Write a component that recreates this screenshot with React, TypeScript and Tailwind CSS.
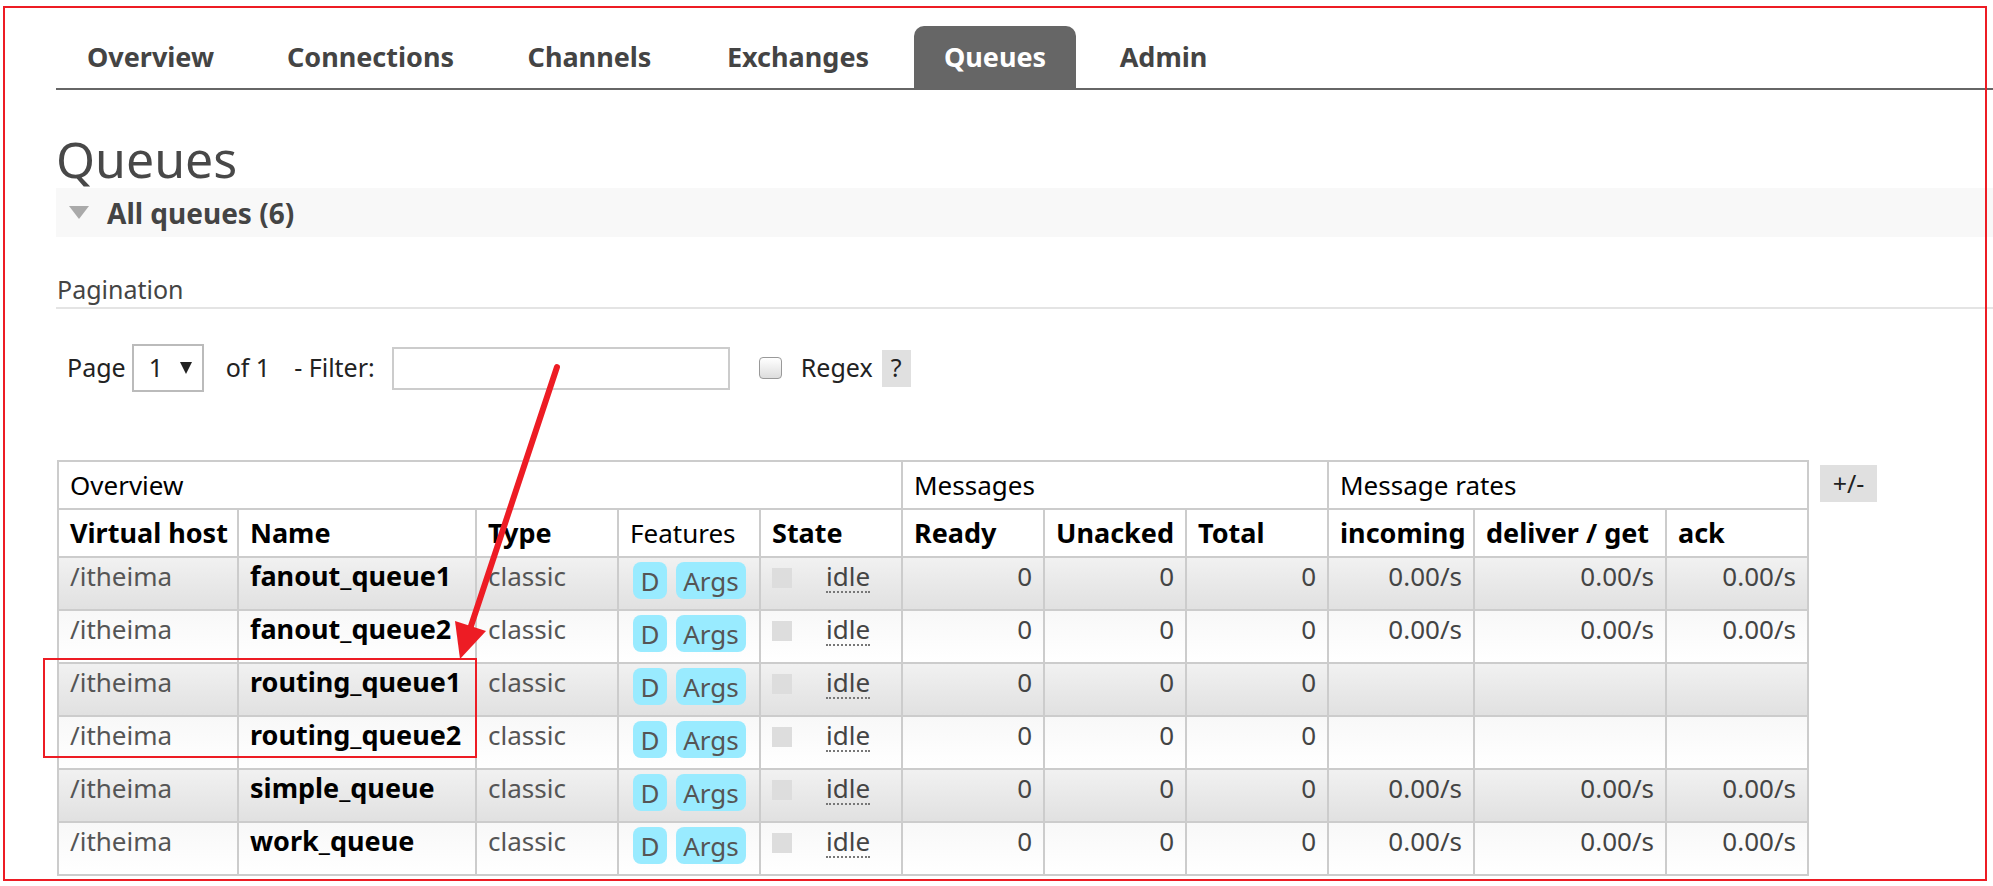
import React from "react";

/* ── Data ── */
const TABS = [
  { label: "Overview", w: "w-[187px]" },
  { label: "Connections", w: "w-[225px]" },
  { label: "Channels", w: "w-[185px]" },
  { label: "Exchanges", w: "w-[204px]" },
  { label: "Queues", w: "w-[162px]", active: true },
  { label: "Admin", w: "w-[147px]" },
];

const QUEUES = [
  { name: "fanout_queue1", rates: true },
  { name: "fanout_queue2", rates: true },
  { name: "routing_queue1", rates: false },
  { name: "routing_queue2", rates: false },
  { name: "simple_queue", rates: true },
  { name: "work_queue", rates: true },
];

const COLS = [180, 238, 142, 142, 142, 142, 142, 142, 146, 192, 142];

const td = "border-2 border-[#ccc] align-top px-[11px] pt-[3px] pb-0";
const th = "border-2 border-[#ccc] px-[11px] text-left align-middle leading-[30px] whitespace-nowrap";

export default function App() {
  return (
    <div className="relative w-[1993px] h-[886px] overflow-hidden bg-white font-['Noto_Sans',sans-serif] text-[#444]">
      <div className="pl-[56px] pt-[26px]">
        {/* Nav tabs */}
        <div className="flex gap-[14px] pl-[1px] border-b-2 border-[#666]">
          {TABS.map((t) => (
            <div
              key={t.label}
              className={`${t.w} h-[62px] flex items-center justify-center text-[27px] font-bold rounded-t-[10px] ${
                t.active ? "bg-[#666] text-white" : "text-[#444]"
              }`}
            >
              {t.label}
            </div>
          ))}
        </div>

        {/* Title */}
        <h1 className="mt-[45px] text-[50px] leading-[49px] font-normal text-[#484848]">Queues</h1>

        {/* All queues bar */}
        <div className="mt-[4px] h-[49px] bg-[#f8f8f8] flex items-center">
          <svg width="20" height="13" viewBox="0 0 20 13" className="ml-[13px]">
            <polygon points="0,0 20,0 10,13" fill="#aaa" />
          </svg>
          <span className="ml-[18px] text-[28px] font-bold text-[#444]">All queues (6)</span>
        </div>

        {/* Pagination */}
        <div className="mt-[37px] border-b-2 border-[#e4e4e4] pb-[3px]">
          <div className="pl-[1px] text-[25px] leading-[30px] text-[#444]">Pagination</div>
        </div>

        <div className="mt-[35px] flex items-center h-[48px] text-[25px] text-[#222]">
          <span className="ml-[11px]">Page</span>
          <div className="ml-[6px] w-[72px] h-[48px] border-2 border-[#bbb] flex items-center pl-[15px]">
            <span>1</span>
            <svg width="12" height="12" viewBox="0 0 12 12" className="ml-[17px]">
              <polygon points="0,0 12,0 6,12" fill="#222" />
            </svg>
          </div>
          <span className="ml-[22px]">of 1</span>
          <span className="ml-[24px]">- Filter:</span>
          <div className="ml-[17px] w-[338px] h-[43px] border-2 border-[#ccc] bg-white" />
          <div className="ml-[29px] w-[23px] h-[22px] rounded-[4px] border border-[#999] bg-linear-to-b from-white to-[#ddd]" />
          <span className="ml-[19px]">Regex</span>
          <span className="ml-[9px] w-[29px] h-[37px] bg-[#e0e0e0] flex items-center justify-center">?</span>
        </div>

        {/* Table */}
        <div className="mt-[68px] flex items-start">
          <table className="ml-[1px] table-fixed border-collapse w-[1750px] text-[26px]">
            <colgroup>
              {COLS.map((w, i) => (
                <col key={i} style={{ width: w }} />
              ))}
            </colgroup>
            <thead>
              <tr className="h-[48px] text-black">
                <th colSpan={5} className={`${th} font-normal`}>Overview</th>
                <th colSpan={3} className={`${th} font-normal`}>Messages</th>
                <th colSpan={3} className={`${th} font-normal`}>Message rates</th>
              </tr>
              <tr className="h-[48px] text-black text-[27px]">
                <th className={`${th} font-bold`}>Virtual host</th>
                <th className={`${th} font-bold`}>Name</th>
                <th className={`${th} font-bold`}>Type</th>
                <th className={`${th} font-normal text-[26px]`}>Features</th>
                <th className={`${th} font-bold`}>State</th>
                <th className={`${th} font-bold`}>Ready</th>
                <th className={`${th} font-bold`}>Unacked</th>
                <th className={`${th} font-bold`}>Total</th>
                <th className={`${th} font-bold`}>incoming</th>
                <th className={`${th} font-bold`}>deliver / get</th>
                <th className={`${th} font-bold`}>ack</th>
              </tr>
            </thead>
            <tbody>
              {QUEUES.map((q, i) => {
                const bg =
                  i % 2 === 0
                    ? "bg-linear-to-b from-[#f1f1f1] to-[#e1e1e1]"
                    : "bg-linear-to-b from-[#f8f8f8] to-white";
                return (
                  <tr key={q.name} className="h-[53px] leading-[30px]">
                    <td className={`${td} ${bg} text-[#555]`}>/itheima</td>
                    <td className={`${td} ${bg} text-black font-bold text-[27px] whitespace-nowrap`}>{q.name}</td>
                    <td className={`${td} ${bg} text-[#555]`}>classic</td>
                    <td className={`${td} ${bg} pl-[14px]`}>
                      <div className="flex gap-[9px] mt-[1px]">
                        <span className="w-[34px] h-[37px] rounded-[8px] bg-[#99ebff] text-[#555] flex items-center justify-center">D</span>
                        <span className="w-[70px] h-[37px] rounded-[8px] bg-[#99ebff] text-[#555] flex items-center justify-center">Args</span>
                      </div>
                    </td>
                    <td className={`${td} ${bg}`}>
                      <div className="flex items-start">
                        <span className="mt-[7px] w-[20px] h-[20px] bg-[#ddd]" />
                        <span className="ml-[34px] text-[#444] border-b-2 border-dotted border-[#777] leading-[30px]">idle</span>
                      </div>
                    </td>
                    <td className={`${td} ${bg} text-right`}>0</td>
                    <td className={`${td} ${bg} text-right`}>0</td>
                    <td className={`${td} ${bg} text-right`}>0</td>
                    <td className={`${td} ${bg} text-right`}>{q.rates ? "0.00/s" : ""}</td>
                    <td className={`${td} ${bg} text-right`}>{q.rates ? "0.00/s" : ""}</td>
                    <td className={`${td} ${bg} text-right`}>{q.rates ? "0.00/s" : ""}</td>
                  </tr>
                );
              })}
            </tbody>
          </table>
          <span className="ml-[11px] mt-[5px] w-[57px] h-[37px] bg-[#e0e0e0] text-[25px] text-[#222] flex items-center justify-center">+/-</span>
        </div>
      </div>

      {/* Annotations */}
      <div className="absolute left-[3px] top-[6px] w-[1984px] h-[875px] border-2 border-[#ed1c24] pointer-events-none" />
      <div className="absolute left-[43px] top-[658px] w-[434px] h-[100px] border-2 border-[#ed1c24] pointer-events-none" />
      <svg className="absolute left-0 top-0 pointer-events-none" width="1993" height="886">
        <line x1="557" y1="367" x2="469" y2="632" stroke="#ed1c24" strokeWidth="6" strokeLinecap="round" />
        <polygon points="460,659 455,621 486,631" fill="#ed1c24" />
      </svg>
    </div>
  );
}
